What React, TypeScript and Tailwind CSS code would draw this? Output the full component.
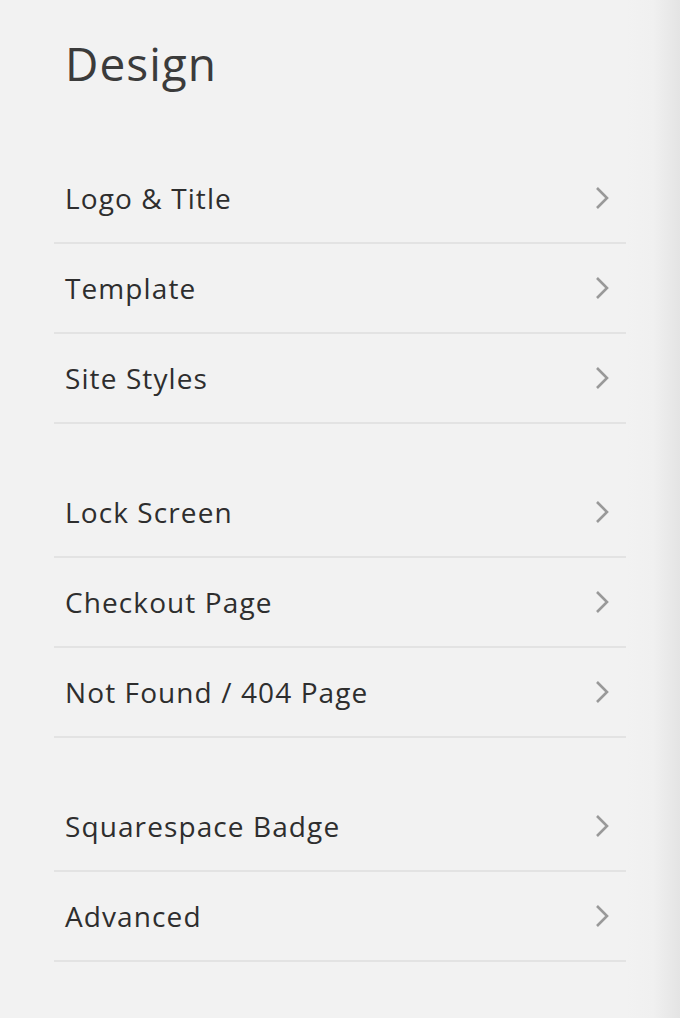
const groups: string[][] = [
  ["Logo & Title", "Template", "Site Styles"],
  ["Lock Screen", "Checkout Page", "Not Found / 404 Page"],
  ["Squarespace Badge", "Advanced"],
];

function Row({ label }: { label: string }) {
  return (
    <div className="flex h-[90px] items-center justify-between border-b-2 border-[#e3e3e3] pl-[11px] pr-[16px]">
      <span className="text-[28px] tracking-[1.1px] text-[#2e2e2e]">{label}</span>
      <svg width="16" height="24" viewBox="0 0 16 24" fill="none" className="text-[#999999]">
        <path d="M3 2 L13 12 L3 22" stroke="currentColor" strokeWidth="2.6" />
      </svg>
    </div>
  );
}

export default function App() {
  return (
    <div
      className="flex min-h-[1018px] w-[680px] bg-[#f2f2f2]"
      style={{ fontFamily: '"Open Sans", "Liberation Sans", sans-serif' }}
    >
      <div className="flex w-[626px] flex-col pl-[54px]">
        <h1 className="pl-[11px] pt-[32px] text-[46px] leading-[62px] tracking-[1px] text-[#3b3b3b]">Design</h1>
        <div className="mt-[60px] flex flex-col gap-[44px]">
          {groups.map((g, i) => (
            <div key={i} className="flex flex-col">
              {g.map((l) => (
                <Row key={l} label={l} />
              ))}
            </div>
          ))}
        </div>
      </div>
      <div className="flex-1 bg-gradient-to-r from-[#f2f2f2] via-[#f0f0f0] to-[#e4e4e4]" />
    </div>
  );
}
